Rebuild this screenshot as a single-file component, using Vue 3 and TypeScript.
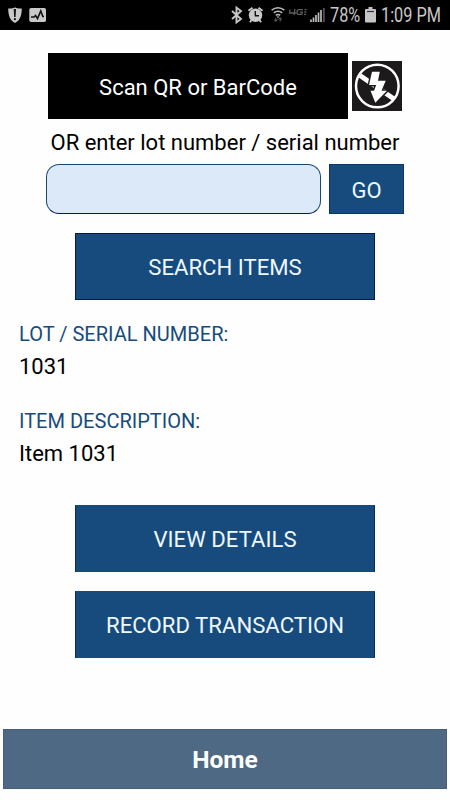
<script setup lang="ts">
import { ref } from 'vue'

const lot = ref('')
const details = [
  { label: 'LOT / SERIAL NUMBER:', value: '1031' },
  { label: 'ITEM DESCRIPTION:', value: 'Item 1031' },
]
</script>

<template>
  <div class="screen">
    <header class="status">
      <svg class="left-icons" width="60" height="30" viewBox="0 0 60 30">
        <path d="M15 7.2c-2 1.3-4.400 1.500-6.800 1.300.1 6.300 1.300 11.600 6.800 14.500 5.500-2.900 6.700-8.200 6.800-14.500-2.400.2-4.800 0-6.800-1.300z" fill="#c8c8c8" />
        <path d="M13.700 9h2.300l-.4 8h-1.500z" fill="#111" />
        <circle cx="14.900" cy="19.200" r="1.100" fill="#111" />
        <rect x="29.300" y="8" width="16.700" height="14" rx="1.800" fill="#c8c8c8" />
        <path d="M31 17h3l1.500-1.500 2 3 3.300-7.500 2 5.500h1.200" fill="none" stroke="#111" stroke-width="1.600" />
      </svg>
      <svg class="right-icons" width="100" height="30" viewBox="228 0 100 30">
        <path d="M232 11l9 8-4.500 3.400V7.600l4.500 3.400-9 8" fill="none" stroke="#c8c8c8" stroke-width="1.900" />
        <circle cx="255.500" cy="15.200" r="6.700" fill="#c8c8c8" />
        <path d="M248.500 10.800l4-3M262.500 10.800l-4-3M251.500 20l-1.500 2.200M259.500 20l1.500 2.200" stroke="#c8c8c8" stroke-width="1.900" />
        <path d="M255.300 11v4.700h3.700" fill="none" stroke="#111" stroke-width="1.400" />
        <path d="M271.600 10.200q6.400-4.800 12.800 0M273.800 12.800q4.200-3.200 8.400 0M275.800 15.300q2.200-1.600 4.400 0" fill="none" stroke="#bdbdbd" stroke-width="1.500" />
        <path d="M276.500 16.600h3l-1.500 1.600z" fill="#bdbdbd" />
        <path d="M275.800 17.800v3.500M274.200 19.500l1.600 1.800 1.600-1.800M280.200 21.500v-3.500M278.600 19.600l1.600-1.800 1.600 1.800" fill="none" stroke="#696969" stroke-width="1" />
        <path d="M290 9.500l-.5 3.500h6.500M294.800 9l-.7 6M303 9.700h-4.600l-1.200 1-.3 2.600 1 1.100h4l.4-2.200h-2.500M304.500 9.700h2M304.300 12h2M304 14.300h2" fill="none" stroke="#5d5d5d" stroke-width="1.300" />
        <path d="M311 22v-2.500M313.500 22v-4.500M316 22v-7M318.500 22v-9.500M321 22v-12" stroke="#bcbcbc" stroke-width="1.700" />
        <path d="M323.900 22V8" stroke="#555" stroke-width="1.700" />
      </svg>
      <span class="percent">78%</span>
      <svg class="battery" width="11" height="16" viewBox="0 0 11 16">
        <path d="M1 2h2.500V0h4v2H10q1 0 1 1v11.500q0 1-1 1H1q-1 0-1-1V3q0-1 1-1z" fill="#c5c5c5" />
        <path d="M2 4.500h7" stroke="#333" stroke-width="1.200" />
      </svg>
      <span class="time">1:09 PM</span>
    </header>
    <main class="content">
      <div class="scan-row">
        <button class="scan"><span>Scan QR or BarCode</span></button>
        <button class="flash" aria-label="Flash off">
          <svg width="50" height="50" viewBox="0 0 50 50">
            <rect width="50" height="50" fill="#1d1a1b" />
            <circle cx="25.300" cy="25" r="21.300" fill="none" stroke="#fff" stroke-width="2.500" />
            <path d="M8 14.500L42 38" stroke="#fff" stroke-width="4.800" />
            <path d="M20 10.700H27.800L26 19.800H33.700L29.500 29.800H35L23.300 41.700 18.500 29.800H22L24.200 24H17z" fill="#fff" stroke="#1d1a1b" stroke-width="2.800" paint-order="stroke" />
          </svg>
        </button>
      </div>
      <label class="prompt" for="lot">OR enter lot number / serial number</label>
      <div class="entry">
        <input id="lot" v-model="lot" type="text" />
        <button class="blue go">GO</button>
      </div>
      <button class="blue wide">SEARCH ITEMS</button>
      <dl class="details">
        <div v-for="d in details" :key="d.label" class="detail">
          <dt>{{ d.label }}</dt>
          <dd>{{ d.value }}</dd>
        </div>
      </dl>
      <button class="blue wide view">VIEW DETAILS</button>
      <button class="blue wide record">RECORD TRANSACTION</button>
    </main>
    <button class="home">Home</button>
  </div>
</template>

<style>
body { margin: 0; background: #fff; }
</style>

<style scoped>
* { box-sizing: border-box; }
.screen {
  width: 450px;
  height: 800px;
  display: flex;
  flex-direction: column;
  background: #fefefe;
  color: #000;
  font-family: Roboto, sans-serif;
  overflow: hidden;
}
button {
  margin: 0;
  padding: 0;
  border: 0;
  font: inherit;
  display: flex;
  align-items: center;
  justify-content: center;
  white-space: nowrap;
}
.status {
  flex: none;
  height: 30px;
  background: #000;
  color: #c8c8c8;
  display: flex;
  align-items: center;
  font-size: 19.500px;
  line-height: 30px;
  white-space: nowrap;
}
.status svg { flex: none; display: block; }
.right-icons { margin-left: 168px; }
.percent,
.time {
  flex: none;
  padding-top: 1px;
  transform: scaleX(0.835);
  transform-origin: left;
}
.percent { width: 35px; margin-left: 2px; }
.battery { margin-left: 0; }
.time { width: 72px; margin-left: 5px; }
.content {
  flex: 1;
  display: flex;
  flex-direction: column;
  align-items: center;
  padding-top: 23px;
  font-size: 22px;
}
.scan-row { display: flex; align-items: center; gap: 4px; height: 66px; }
.scan { width: 300px; height: 66px; background: #000; color: #fff; }
.scan span { padding-top: 2px; }
.flash { width: 50px; height: 50px; }
.prompt { height: 45px; line-height: 48px; white-space: nowrap; }
.entry { display: flex; gap: 8px; height: 50px; }
input {
  width: 275px;
  height: 50px;
  border: 1px solid #174a70;
  border-bottom-color: #061b54;
  border-radius: 13px;
  background: #dce9f9;
  padding: 0 12px;
  font: inherit;
  outline: none;
}
.blue { background: #174b7d; color: #eef8ff; border: 1px solid #0b3768; }
.go { width: 75px; height: 50px; padding-top: 2px; }
.wide {
  width: 300px;
  height: 67px;
  margin-top: 19px;
  border-color: #031a4b;
  flex: none;
  font-size: 22.150px;
}
.details { width: 412px; margin: 18px 0 0; flex: none; }
.detail { height: 87px; }
dt { color: #174b7d; font-size: 20.050px; line-height: 33px; height: 32px; }
dd { margin: 0; line-height: 34px; }
.view { margin-top: 13px; border-color: #174b7d #092b5b; }
.record { border-color: #174b7d #092b5b; }
.home {
  flex: none;
  width: 444px;
  height: 60px;
  margin: 0 3px 11px;
  padding-top: 1px;
  background: #4e6983;
  border: 1px solid #466078;
  color: #fff;
  font-size: 24.500px;
  font-weight: 700;
}
</style>
